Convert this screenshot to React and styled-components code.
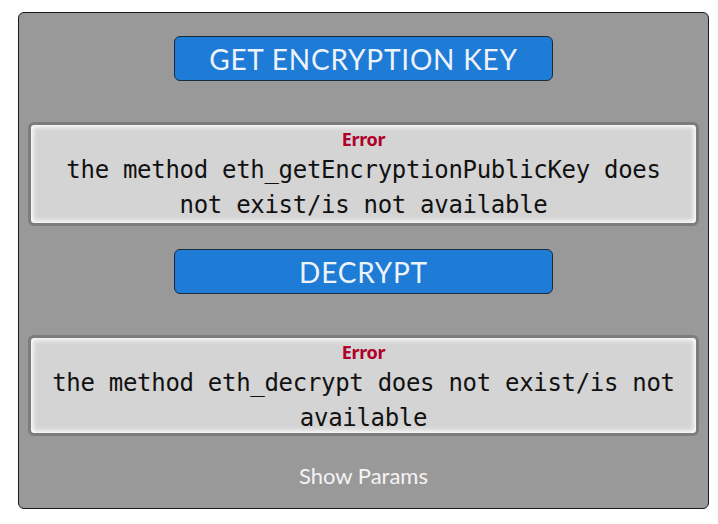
import React from 'react';
import styled, { createGlobalStyle } from 'styled-components';

const Global = createGlobalStyle`
  *, *::before, *::after { box-sizing: border-box; }
  body {
    margin: 0;
    background: #ffffff;
    font-family: Lato, "Noto Sans", sans-serif;
  }
`;

const Page = styled.div`
  padding: 12px 0 0 18px;
`;

const Panel = styled.div`
  width: 691px;
  height: 497px;
  background: #999999;
  border: 1px solid #1a1a1a;
  border-radius: 6px;
  display: flex;
  flex-direction: column;
  align-items: center;
  padding: 23px 9px 0 9px;
`;

const ActionButton = styled.button`
  width: 379px;
  height: 45px;
  flex-shrink: 0;
  background: #1e7bd6;
  border: 1px solid #1c2b3a;
  border-radius: 6px;
  color: #eef3fb;
  font-family: Lato, "Noto Sans", sans-serif;
  font-size: 28px;
  letter-spacing: 0.8px;
  font-weight: 400;
  padding: 0;
  margin-bottom: 41px;
  cursor: pointer;
`;

const ErrorBox = styled.div`
  align-self: stretch;
  flex-shrink: 0;
  height: ${p => p.$h}px;
  border: 3px solid #7c7c7c;
  border-radius: 6px;
  background: #d4d4d4;
  box-shadow: inset 0 0 5px 2px #ffffff;
  display: flex;
  flex-direction: column;
  align-items: center;
  padding-top: 4px;
  margin-bottom: 23px;
`;

const ErrorTitle = styled.div`
  color: #b0002a;
  font-family: "Noto Sans", sans-serif;
  font-weight: 700;
  font-size: 18px;
  line-height: 20px;
  letter-spacing: -0.3px;
`;

const ErrorText = styled.div`
  font-family: "DejaVu Sans Mono", monospace;
  font-size: 24px;
  letter-spacing: -0.3px;
  line-height: 35px;
  margin-top: 4px;
  color: #111;
  text-align: center;
  padding: 0 10px;
`;

const ShowParams = styled.div`
  color: #f4f4f4;
  font-family: Lato, "Noto Sans", sans-serif;
  font-size: 22px;
  line-height: 26px;
  margin-top: 4px;
`;

export default function App() {
  return (
    <>
      <Global />
      <Page>
        <Panel>
          <ActionButton>GET ENCRYPTION KEY</ActionButton>
          <ErrorBox $h={104}>
            <ErrorTitle>Error</ErrorTitle>
            <ErrorText>the method eth_getEncryptionPublicKey does not exist/is not available</ErrorText>
          </ErrorBox>
          <ActionButton>DECRYPT</ActionButton>
          <ErrorBox $h={101}>
            <ErrorTitle>Error</ErrorTitle>
            <ErrorText>the method eth_decrypt does not exist/is not available</ErrorText>
          </ErrorBox>
          <ShowParams>Show Params</ShowParams>
        </Panel>
      </Page>
    </>
  );
}
